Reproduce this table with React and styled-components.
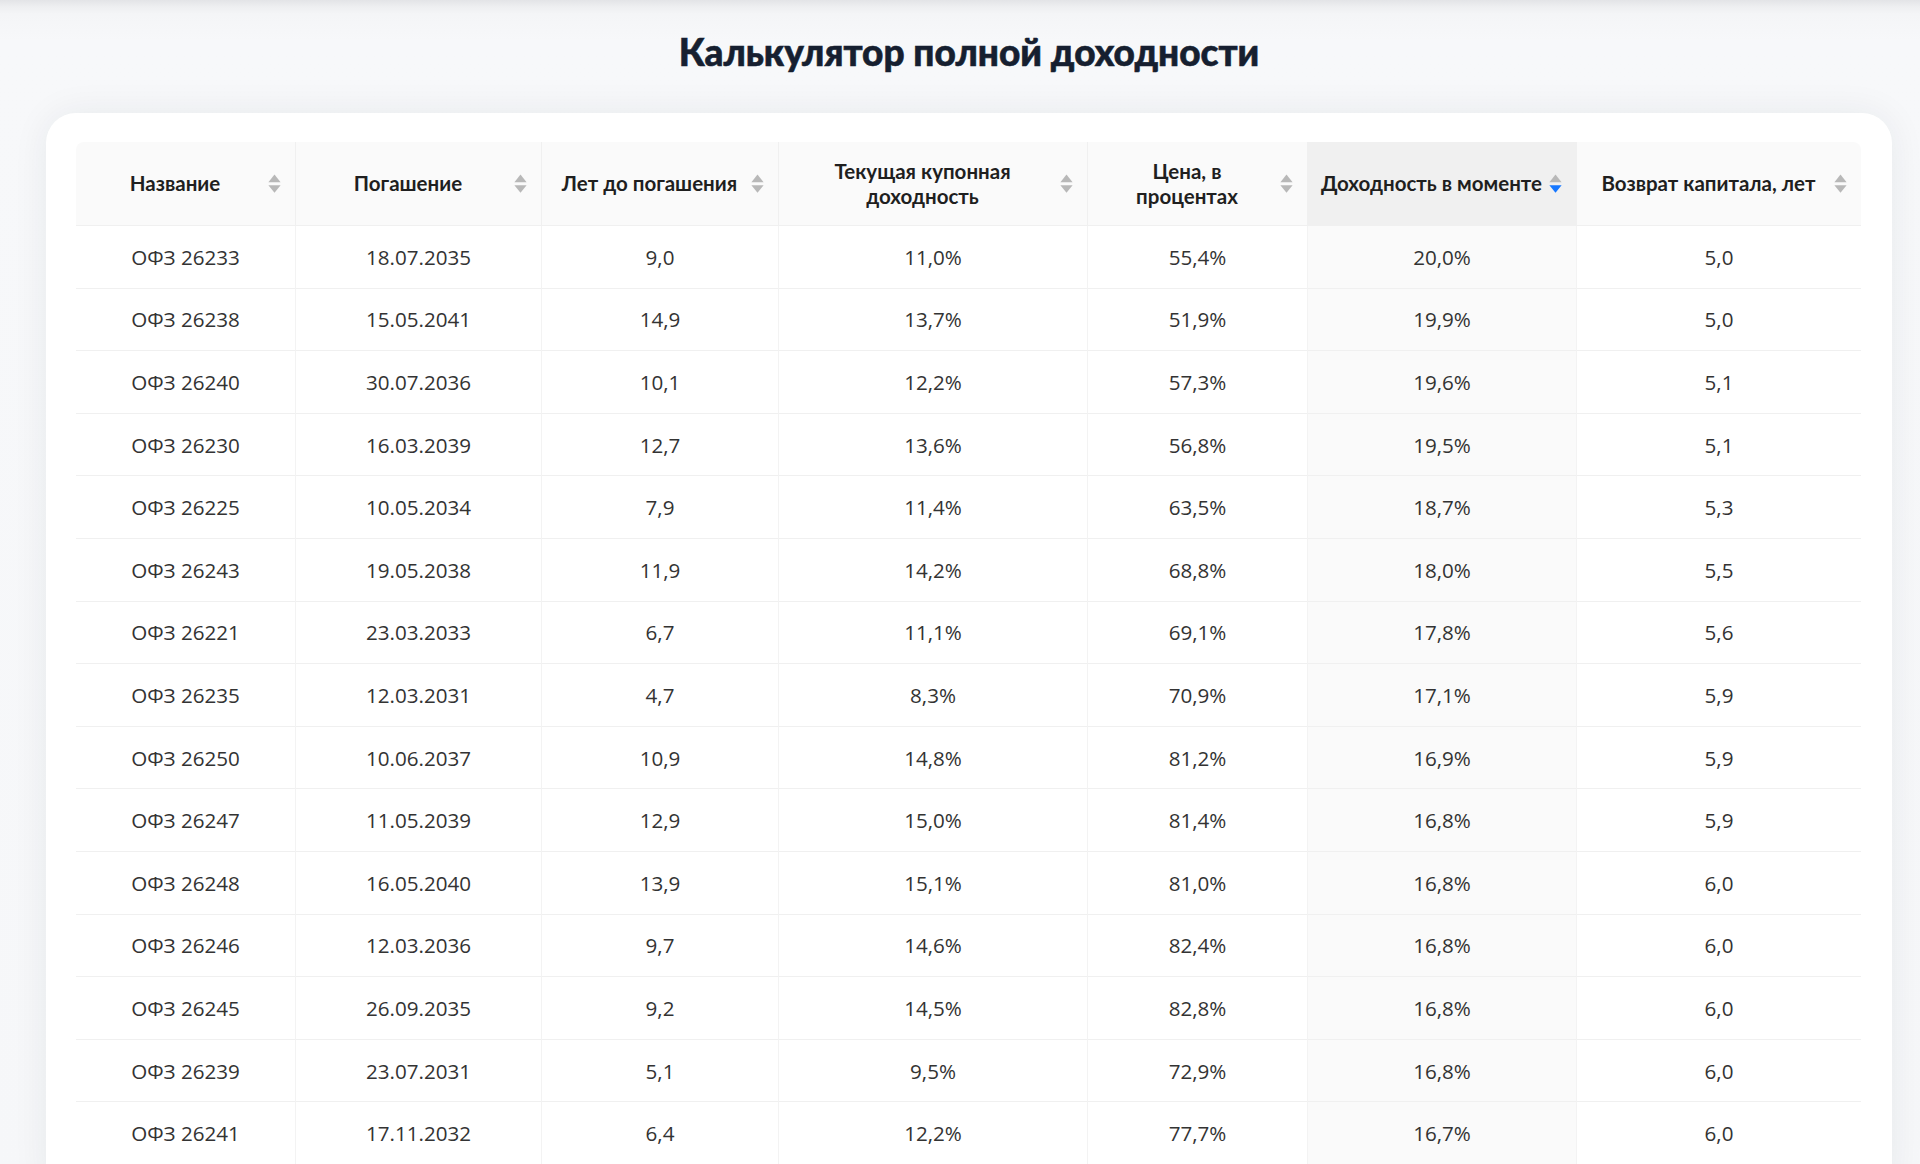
import styled, { createGlobalStyle } from "styled-components";

const GlobalStyle = createGlobalStyle`
  html, body {
    margin: 0;
    padding: 0;
  }
  body {
    background: #f6f7f9;
    font-family: "Open Sans", "Noto Sans", sans-serif;
  }
`;

const Page = styled.div`
  min-height: 100vh;
  padding: 0 28px 40px 46px;
  box-sizing: border-box;
  background: linear-gradient(
    to bottom,
    #e3e4e7 0px,
    #eeeff1 7px,
    #f4f5f7 14px,
    #f7f8fa 40px,
    #f6f7f9 100%
  );
`;

const Title = styled.h1`
  margin: 0;
  padding-top: 29px;
  height: 46px;
  line-height: 46px;
  text-align: center;
  font-family: "Lato", "Noto Sans", sans-serif;
  font-weight: 900;
  font-size: 37px;
  color: #161f30;
  -webkit-text-stroke: 0.6px #161f30;
`;

const Card = styled.section`
  margin-top: 38px;
  width: 1846px;
  box-sizing: border-box;
  padding: 29px 31px 30px 30px;
  background: #fff;
  border-radius: 30px;
  box-shadow: 0 0 36px rgba(30, 40, 60, 0.07);
`;

const Table = styled.table`
  width: 1785px;
  table-layout: fixed;
  border-collapse: separate;
  border-spacing: 0;
`;

const Th = styled.th`
  height: 84px;
  padding: 0 14px 0 12px;
  background: ${({ $active }) => ($active ? "#f0f0f0" : "#fafafa")};
  border-bottom: 1px solid #f0f0f0;
  border-left: ${({ $first }) => ($first ? "none" : "1px solid #f0f0f0")};
  box-sizing: border-box;
  font-family: "Lato", "Noto Sans", sans-serif;
  font-weight: 700;
  font-size: 20.5px;
  line-height: 24.5px;
  color: #1f1f1f;
  text-align: center;
  &:first-child {
    border-top-left-radius: 8px;
  }
  &:last-child {
    border-top-right-radius: 8px;
  }
`;

const HeadInner = styled.div`
  display: flex;
  align-items: center;
  gap: 6px;
`;

const HeadTitle = styled.span`
  flex: 1;
  text-align: center;
  white-space: nowrap;
`;

const Td = styled.td`
  height: 62.6px;
  padding: 0 12px;
  box-sizing: border-box;
  text-align: center;
  font-size: 20.6px;
  color: #333;
  background: ${({ $active }) => ($active ? "#fafafa" : "#fff")};
  border-bottom: 1px solid #f0f0f0;
  border-left: ${({ $first }) => ($first ? "none" : "1px solid #f3f3f3")};
`;

function SortIcon({ dir }) {
  const up = dir === "up" ? "#1677ff" : "#b8b8b8";
  const down = dir === "down" ? "#1677ff" : "#b8b8b8";
  return (
    <svg width="13" height="20" viewBox="0 0 13 20">
      <path d="M6.5 0.6 L12.6 8.2 L0.4 8.2 Z" fill={up} />
      <path d="M0.4 11.2 L12.6 11.2 L6.5 18.8 Z" fill={down} />
    </svg>
  );
}

const columns = [
  { title: "Название", width: 219 },
  { title: "Погашение", width: 246 },
  { title: "Лет до погашения", width: 237 },
  { title: ["Текущая купонная", "доходность"], width: 309 },
  { title: ["Цена, в", "процентах"], width: 220 },
  { title: "Доходность в моменте", width: 269, active: true },
  { title: "Возврат капитала, лет", width: 285 },
];

const rows = [
  ["ОФЗ 26233", "18.07.2035", "9,0", "11,0%", "55,4%", "20,0%", "5,0"],
  ["ОФЗ 26238", "15.05.2041", "14,9", "13,7%", "51,9%", "19,9%", "5,0"],
  ["ОФЗ 26240", "30.07.2036", "10,1", "12,2%", "57,3%", "19,6%", "5,1"],
  ["ОФЗ 26230", "16.03.2039", "12,7", "13,6%", "56,8%", "19,5%", "5,1"],
  ["ОФЗ 26225", "10.05.2034", "7,9", "11,4%", "63,5%", "18,7%", "5,3"],
  ["ОФЗ 26243", "19.05.2038", "11,9", "14,2%", "68,8%", "18,0%", "5,5"],
  ["ОФЗ 26221", "23.03.2033", "6,7", "11,1%", "69,1%", "17,8%", "5,6"],
  ["ОФЗ 26235", "12.03.2031", "4,7", "8,3%", "70,9%", "17,1%", "5,9"],
  ["ОФЗ 26250", "10.06.2037", "10,9", "14,8%", "81,2%", "16,9%", "5,9"],
  ["ОФЗ 26247", "11.05.2039", "12,9", "15,0%", "81,4%", "16,8%", "5,9"],
  ["ОФЗ 26248", "16.05.2040", "13,9", "15,1%", "81,0%", "16,8%", "6,0"],
  ["ОФЗ 26246", "12.03.2036", "9,7", "14,6%", "82,4%", "16,8%", "6,0"],
  ["ОФЗ 26245", "26.09.2035", "9,2", "14,5%", "82,8%", "16,8%", "6,0"],
  ["ОФЗ 26239", "23.07.2031", "5,1", "9,5%", "72,9%", "16,8%", "6,0"],
  ["ОФЗ 26241", "17.11.2032", "6,4", "12,2%", "77,7%", "16,7%", "6,0"],
];

export default function App() {
  return (
    <>
      <GlobalStyle />
      <Page>
        <Title>Калькулятор полной доходности</Title>
        <Card>
          <Table>
            <colgroup>
              {columns.map((c, i) => (
                <col key={i} style={{ width: c.width }} />
              ))}
            </colgroup>
            <thead>
              <tr>
                {columns.map((c, i) => (
                  <Th key={i} $active={c.active} $first={i === 0}>
                    <HeadInner>
                      <HeadTitle>
                        {Array.isArray(c.title) ? (
                          <>
                            {c.title[0]}
                            <br />
                            {c.title[1]}
                          </>
                        ) : (
                          c.title
                        )}
                      </HeadTitle>
                      <SortIcon dir={c.active ? "down" : null} />
                    </HeadInner>
                  </Th>
                ))}
              </tr>
            </thead>
            <tbody>
              {rows.map((r, ri) => (
                <tr key={ri}>
                  {r.map((v, ci) => (
                    <Td key={ci} $active={columns[ci].active} $first={ci === 0}>
                      {v}
                    </Td>
                  ))}
                </tr>
              ))}
            </tbody>
          </Table>
        </Card>
      </Page>
    </>
  );
}
